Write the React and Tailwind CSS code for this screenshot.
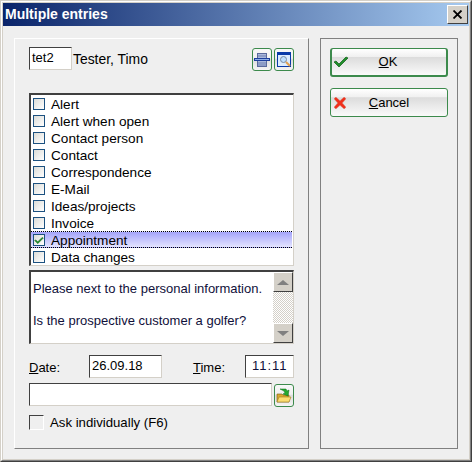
const entries = [
  "Alert",
  "Alert when open",
  "Contact person",
  "Contact",
  "Correspondence",
  "E-Mail",
  "Ideas/projects",
  "Invoice",
  "Appointment",
  "Data changes",
];

const sunken = "border-t-[#404040] border-l-[#404040] border-r-[#d4d0c8] border-b-[#d4d0c8] bg-white";

function CheckMark({ className }) {
  return (
    <svg className={className} viewBox="0 0 16 12" width="16" height="12">
      <path d="M1 6l2-1 3 3 7-7 2 1-9 9z" fill="#1f8f2a" stroke="#0b5a14" strokeWidth="0.7" />
    </svg>
  );
}

function CrossMark() {
  return (
    <svg viewBox="0 0 13 13" width="12" height="12">
      <path d="M2 0l4.500 4 4.500-4 2 2-4 4.500 4 4.500-2 2-4.500-4-4.500 4-2-2 4-4.500-4-4.500z" fill="#f0301c" stroke="#d08070" strokeWidth="0.5" />
    </svg>
  );
}

function PrinterIcon() {
  return (
    <svg viewBox="0 0 16 16" width="16" height="16">
      <rect x="3.500" y="1.500" width="9" height="13" fill="#aab8dc" stroke="#5a6a9c" />
      <path d="M4 4h8M4 11h8M4 13h8" stroke="#6f80b0" />
      <rect x="0" y="6" width="16" height="3" fill="#1c3f9c" />
      <path d="M1 7.500h14" stroke="#8fb0e8" />
    </svg>
  );
}

function SearchWindowIcon() {
  return (
    <svg viewBox="0 0 16 16" width="16" height="16">
      <rect x="1.500" y="0.500" width="13" height="14" fill="#dcecff" stroke="#0a3aa8" />
      <rect x="2" y="1" width="12" height="2" fill="#0a3aa8" />
      <circle cx="7.500" cy="7.500" r="3" fill="#bfe0ff" stroke="#7a8aa0" />
      <path d="M10 10l4 4" stroke="#e0a050" strokeWidth="2" />
    </svg>
  );
}

function FolderIcon() {
  return (
    <svg viewBox="0 0 16 16" width="16" height="16">
      <path d="M1 6h5l1 1h6v7H1z" fill="#d8a830" stroke="#7a5a10" strokeWidth="0.6" />
      <path d="M1 14l2-5h12l-2 5z" fill="#fbdc70" stroke="#a07c1c" strokeWidth="0.6" />
      <path d="M4 1l6 0 1 2 2-1-1 6-5-2 2-1-1-2z" fill="#22ab30" stroke="#0b6a14" strokeWidth="0.5" />
    </svg>
  );
}

function IconButton({ children }) {
  return (
    <button className="w-5 h-[23px] rounded-[3px] border border-[#3c8a4c] bg-[linear-gradient(#f8f8f8_0%,#f0f0f0_45%,#dcdcdc_46%,#f4f4f4_100%)] flex items-center justify-center p-0">
      {children}
    </button>
  );
}

function ScrollButton({ up }) {
  return (
    <div className="h-5 w-5 bg-[#d4d0c8] border border-t-white border-l-white border-r-[#404040] border-b-[#404040] flex items-center justify-center">
      <div
        className={
          up
            ? "w-0 h-0 border-x-[6px] border-x-transparent border-b-[5px] border-b-[#808080]"
            : "w-0 h-0 border-x-[6px] border-x-transparent border-t-[5px] border-t-[#808080]"
        }
      />
    </div>
  );
}

function EntryRow({ label, selected }) {
  return (
    <div
      className={
        selected
          ? "h-[17px] mr-px flex items-center border-y border-dotted border-black bg-[linear-gradient(#a4a4fa,#e4e4ff)]"
          : "h-[17px] mr-px flex items-center"
      }
    >
      <div className="ml-[2px] mt-px w-3 h-3 shrink-0 border border-[#1c5180] bg-[linear-gradient(135deg,#dcdcd7,#ffffff)] flex items-center justify-center">
        {selected && <CheckMark className="w-[10px] h-[9px]" />}
      </div>
      <span className="ml-[6px] mt-[2px] leading-none text-[13.6px]">{label}</span>
    </div>
  );
}

function DialogButton({ icon, children, isDefault }) {
  return (
    <button
      className={
        isDefault
          ? "w-[118px] h-[29px] rounded-[3px] border border-[#3c8a4c] border-x-[2px] border-b-[2px] bg-[linear-gradient(#ffffff_0%,#f0f0f0_30%,#dcdcdc_32%,#fafafa_100%)] grid grid-cols-[22px_1fr_24px] items-center"
          : "w-[118px] h-[29px] rounded-[3px] border border-[#3c8a4c] bg-[linear-gradient(#ffffff_0%,#f0f0f0_30%,#dcdcdc_32%,#fafafa_100%)] grid grid-cols-[24px_1fr_24px] items-center"
      }
    >
      <span className={isDefault ? "flex pl-px" : "flex pl-[3px]"}>{icon}</span>
      <span className="text-center">{children}</span>
      <span />
    </button>
  );
}

export default function App() {
  return (
    <div className="w-[472px] h-[462px] font-['Liberation_Sans',Arial,sans-serif] text-[13px] text-black border border-t-[#d4d0c8] border-l-[#d4d0c8] border-r-[#404040] border-b-[#404040]">
      <div className="h-full border border-t-white border-l-white border-r-[#808080] border-b-[#808080] bg-[#d4d0c8] p-px flex flex-col">
        {/* Title bar */}
        <div className="h-[23px] shrink-0 flex items-center justify-between bg-[linear-gradient(90deg,#0a246a,#a6caf0)] pl-[2px] pr-px">
          <span className="text-white font-bold text-[14px]">Multiple entries</span>
          <button className="w-[21px] h-[19px] bg-[#d4d0c8] border border-t-white border-l-white border-r-[#404040] border-b-[#404040] flex items-center justify-center">
            <svg viewBox="0 0 10 9" width="10" height="9">
              <path d="M0.500 0.500l8 8M8.500 0.500l-8 8" stroke="#000" strokeWidth="1.800" />
            </svg>
          </button>
        </div>

        {/* Body */}
        <div className="flex-1 bg-[#efefef] pt-3 pl-[11px] flex gap-[11px]">
          <div className="w-[295px] h-[411px] border border-t-white border-l-white border-r-[#808080] border-b-[#808080] pt-2 pl-[14px]">
            <div className="w-[265px] h-6 flex items-start">
              <div className={`w-[43px] h-[23px] border pl-[2px] leading-[19px] ${sunken}`}>tet2</div>
              <span className="ml-px leading-[24px] text-[13.9px]">Tester, Timo</span>
              <div className="ml-auto mt-px flex gap-[2px]">
                <IconButton><PrinterIcon /></IconButton>
                <IconButton><SearchWindowIcon /></IconButton>
              </div>
            </div>

            {/* Entry list */}
            <div className="w-[265px] h-[173px] mt-[22px] border-2 border-r border-b border-t-[#404040] border-l-[#404040] border-r-[#d4d0c8] border-b-[#d4d0c8] bg-white">
              {entries.map((entry) => (
                <EntryRow key={entry} label={entry} selected={entry === "Appointment"} />
              ))}
            </div>

            {/* Memo */}
            <div className="w-[265px] h-[74px] mt-1 flex border-2 border-r border-b border-t-[#404040] border-l-[#404040] border-r-[#d4d0c8] border-b-[#d4d0c8] bg-white">
              <div className="flex-1 pl-[2px] pt-[9px] leading-4 text-[#10103a]">
                <div>Please next to the personal information.</div>
                <div className="mt-4">Is the prospective customer a golfer?</div>
              </div>
              <div className="w-5 flex flex-col justify-between bg-[repeating-conic-gradient(#d4d0c8_0_25%,#ffffff_0_50%)] bg-[length:2px_2px]">
                <ScrollButton up />
                <ScrollButton />
              </div>
            </div>

            {/* Date and time */}
            <div className="w-[265px] h-[23px] mt-[11px] flex items-center">
              <span className="w-[60px] mt-[2px]"><u>D</u>ate:</span>
              <div className={`w-[73px] h-[23px] border pl-[2px] leading-[20px] ${sunken}`}>26.09.18</div>
              <span className="ml-[31px] mt-[2px]"><u>T</u>ime:</span>
              <div className={`ml-auto w-[49px] h-[23px] border pl-[6px] leading-[20px] tracking-[1px] text-[#10103a] ${sunken}`}>11:11</div>
            </div>

            {/* Path */}
            <div className="w-[265px] mt-[5px] flex gap-[2px] items-start">
              <div className={`w-[243px] h-[23px] border ${sunken}`} />
              <div className="mt-px">
                <IconButton><FolderIcon /></IconButton>
              </div>
            </div>

            <div className="mt-2 h-[15px] flex items-center">
              <div className="w-[15px] h-[15px] border border-t-[#404040] border-l-[#404040] border-r-white border-b-white" />
              <span className="ml-[6px] text-[13.2px]">Ask individually (F6)</span>
            </div>
          </div>

          <div className="w-[138px] h-[411px] border border-[#808080] pt-[9px] pl-[9px] flex flex-col gap-[11px]">
            <DialogButton isDefault icon={<CheckMark />}><u>O</u>K</DialogButton>
            <DialogButton icon={<CrossMark />}><u>C</u>ancel</DialogButton>
          </div>
        </div>
      </div>
    </div>
  );
}
